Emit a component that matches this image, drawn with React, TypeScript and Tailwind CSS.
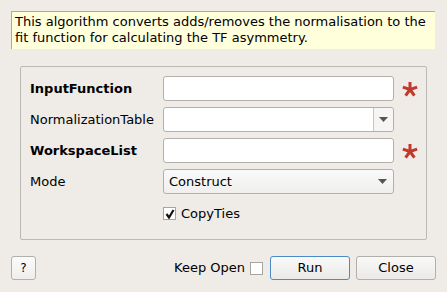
import { ReactNode } from "react";

const font = { fontFamily: '"DejaVu Sans", "Liberation Sans", sans-serif' };

// Asterisque rouge des champs obligatoires
function Required() {
  return (
    <svg width="16" height="16" viewBox="0 0 16 16" className="shrink-0">
      {[-90, -18, 54, 126, 198].map((a) => {
        const r = (a * Math.PI) / 180;
        return (
          <line
            key={a}
            x1="8"
            y1="8.5"
            x2={8 + Math.cos(r) * 7.5}
            y2={8.5 + Math.sin(r) * 7.5}
            stroke="#c0392b"
            strokeWidth="3"
            strokeLinecap="butt"
          />
        );
      })}
    </svg>
  );
}

function Arrow() {
  return (
    <svg width="9" height="5" viewBox="0 0 9 5">
      <path d="M0 0 L9 0 L4.5 5 Z" fill="#555" />
    </svg>
  );
}

function Row({ label, bold, children }: { label: string; bold?: boolean; children: ReactNode }) {
  return (
    <div className="flex items-center h-[25px]">
      <div className={`w-[133px] text-[13px] text-black ${bold ? "font-bold" : ""}`}>{label}</div>
      {children}
    </div>
  );
}

const field =
  "w-[231px] h-[25px] bg-white border border-[#b3b0ac] rounded-[3px] shrink-0";

export default function App() {
  return (
    <div className="w-[447px] h-[292px] bg-[#efebe7] flex flex-col overflow-hidden" style={font}>
      {/* Description */}
      <div className="mt-[11px] ml-[11px] mr-[12px] h-[38px] bg-[#ffffdc] border-l border-t border-[#a9a9a9] pl-[3px] pt-[2px] text-[13px] leading-[16px] text-black">
        This algorithm converts adds/removes the normalisation to the fit function for calculating the TF asymmetry.
      </div>

      {/* Propriétés */}
      <div className="mt-[17px] mx-[20px] h-[174px] border border-[#bcb9b5] rounded-[2px] pl-[9px] pt-[9px] flex flex-col gap-[6px]">
        <Row label="InputFunction" bold>
          <div className={field} />
          <div className="ml-[8px]">
            <Required />
          </div>
        </Row>
        <Row label="NormalizationTable">
          <div className={`${field} flex h-[24px]`}>
            <div className="flex-1" />
            <div className="w-[20px] border-l border-[#c8c5c1] bg-[#f6f5f4] rounded-r-[3px] flex items-center justify-center">
              <Arrow />
            </div>
          </div>
        </Row>
        <Row label="WorkspaceList" bold>
          <div className={field} />
          <div className="ml-[8px]">
            <Required />
          </div>
        </Row>
        <Row label="Mode">
          <div className="w-[231px] h-[25px] border border-[#b3b0ac] rounded-[3px] bg-gradient-to-b from-[#fafafa] to-[#f0efee] flex items-center pl-[5px] pr-[6px] text-[13px] text-black">
            <span className="flex-1">Construct</span>
            <Arrow />
          </div>
        </Row>
        <div className="flex items-center ml-[133px] mt-[4px] gap-[5px]">
          <div className="w-[13px] h-[13px] bg-white border border-[#a8a5a1] flex items-center justify-center">
            <svg width="10" height="10" viewBox="0 0 10 10">
              <path d="M1.5 5 L4 8.5 L8.5 1" fill="none" stroke="#111" strokeWidth="2.2" />
            </svg>
          </div>
          <span className="text-[13px] text-black">CopyTies</span>
        </div>
      </div>

      {/* Boutons */}
      <div className="mt-[16px] flex items-center px-[11px]">
        <button className="w-[25px] h-[24px] border border-[#b3b0ac] rounded-[3px] bg-gradient-to-b from-[#fbfbfb] to-[#efeeec] text-[12px] text-black">
          ?
        </button>
        <div className="flex-1" />
        <span className="text-[13px] text-black mr-[5px]">Keep Open</span>
        <div className="w-[13px] h-[13px] bg-white border border-[#a8a5a1] mr-[7px]" />
        <button className="w-[80px] h-[24px] border border-[#4a8ac6] rounded-[3px] bg-gradient-to-b from-[#f9f9f9] to-[#ebeae8] text-[13px] text-black">
          Run
        </button>
        <button className="ml-[6px] w-[80px] h-[24px] border border-[#b3b0ac] rounded-[3px] bg-gradient-to-b from-[#f9f9f9] to-[#ebeae8] text-[13px] text-black">
          Close
        </button>
      </div>
    </div>
  );
}
